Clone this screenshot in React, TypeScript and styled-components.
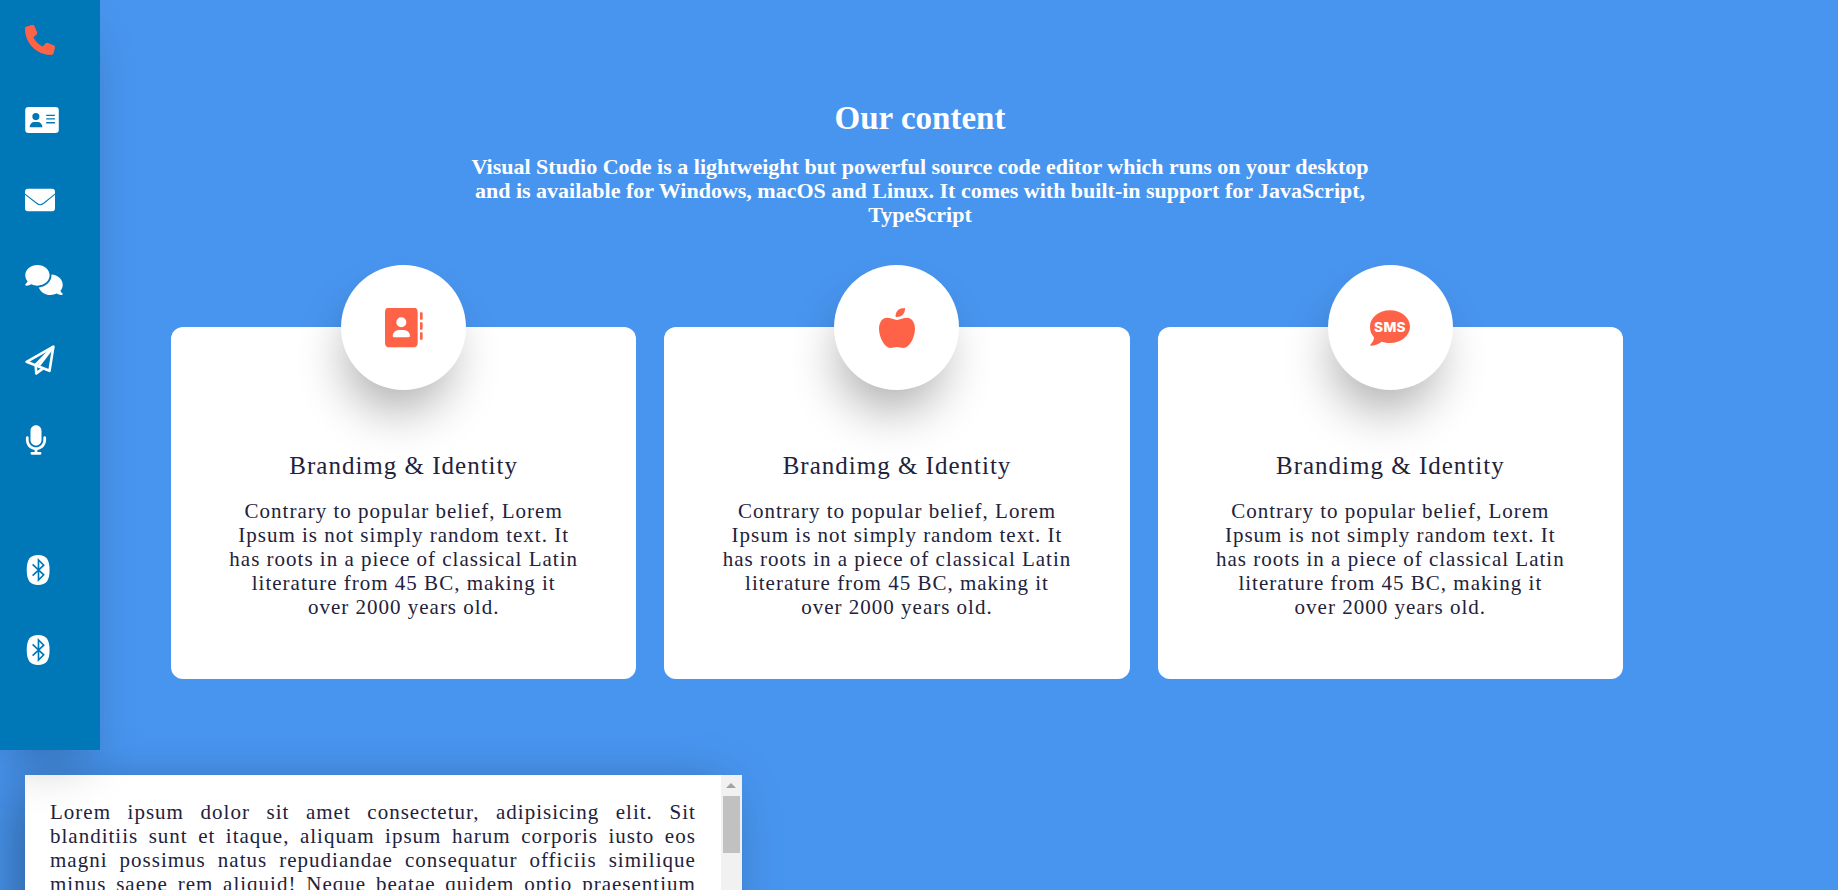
import React, { useState } from 'react';
import styled, { createGlobalStyle } from 'styled-components';
import { FaPhone, FaMicrophone, FaComments } from 'react-icons/fa6';

const colors = {
  page: '#4895ef',
  rail: '#0077b6',
  accent: '#ff6347',
  ink: '#22223b',
  white: '#ffffff',
};

const GlobalStyle = createGlobalStyle`
  *, *::before, *::after { box-sizing: border-box; }
  html { scrollbar-width: none; }
  body {
    margin: 0;
    background: ${colors.page};
    color: ${colors.ink};
    font-family: "Liberation Serif", serif;
    font-size: 21px;
    line-height: 24px;
  }
  h2, h3, p, ul { margin: 0; padding: 0; }
`;

const TopRow = styled.div`
  display: flex;
  align-items: stretch;
`;

const Rail = styled.nav`
  flex: 0 0 100px;
  position: relative;
  z-index: 1;
  padding-bottom: 60px;
  background: ${colors.rail};
  box-shadow: -3px 25px 50px -12px rgba(0, 0, 0, 0.25);
`;

const RailList = styled.ul`
  list-style: none;
`;

const RailItem = styled.li<{ $gapAbove?: boolean }>`
  margin-top: ${({ $gapAbove }) => ($gapAbove ? '50px' : '0')};
`;

const RailLink = styled.a<{ $active?: boolean; $iconWidth: number }>`
  display: flex;
  align-items: center;
  height: 80px;
  padding-left: 25px;
  color: ${({ $active }) => ($active ? colors.accent : colors.white)};

  svg {
    display: block;
    height: 30px;
    width: ${({ $iconWidth }) => $iconWidth}px;
  }
`;

const Content = styled.main`
  flex: 1;
  min-width: 0;
  padding: 100px 0 71px;
`;

const Intro = styled.header`
  display: flex;
  flex-direction: column;
  align-items: center;
  gap: 19px;
  padding-right: 98px;
  color: ${colors.white};
  text-align: center;
`;

const IntroTitle = styled.h2`
  font-size: 33px;
  line-height: 36px;
  font-weight: 700;
`;

const IntroText = styled.p`
  max-width: 910px;
  font-size: 22px;
  font-weight: 700;
`;

const CardGrid = styled.div`
  display: grid;
  grid-template-columns: repeat(3, 1fr);
  gap: 28px;
  margin-top: 100px;
  padding: 0 215px 0 71px;
`;

const Card = styled.section`
  display: flex;
  flex-direction: column;
  align-items: center;
  padding-bottom: 60px;
  border-radius: 12px;
  background: ${colors.white};
  text-align: center;
  letter-spacing: 1px;
`;

const Badge = styled.div`
  display: flex;
  align-items: center;
  justify-content: center;
  width: 125px;
  height: 125px;
  margin-top: -62px;
  border-radius: 50%;
  background: ${colors.white};
  color: ${colors.accent};
  box-shadow: -5px 30px 50px -10px rgba(0, 0, 0, 0.33);

  svg {
    display: block;
    width: 40px;
    height: 40px;
  }
`;

const CardTitle = styled.h3`
  margin: 61px 0 19px;
  font-size: 25px;
  line-height: 29px;
  font-weight: 400;
`;

const CardText = styled.p`
  max-width: 355px;
`;

const Article = styled.article`
  display: flex;
  width: 39%;
  height: 250px;
  margin: 25px;
  background: ${colors.white};
  box-shadow: -14px 10px 50px -5px rgba(0, 0, 0, 0.35);
`;

const ArticleBody = styled.div`
  flex: 1;
  min-width: 0;
  padding: 25px;
  overflow-y: auto;
  scrollbar-width: none;
  letter-spacing: 1px;
  text-align: justify;
`;

const ScrollTrack = styled.div`
  display: flex;
  flex-direction: column;
  flex: 0 0 21px;
  background: #f1f1f1;
`;

const ScrollArrow = styled.span<{ $down?: boolean }>`
  display: flex;
  align-items: center;
  justify-content: center;
  flex: 0 0 21px;

  &::before {
    content: "";
    border: 5px solid transparent;
    border-top: ${({ $down }) => ($down ? '5px solid #a3a3a3' : '0')};
    border-bottom: ${({ $down }) => ($down ? '0' : '5px solid #a3a3a3')};
  }
`;

const ScrollLane = styled.div`
  flex: 1;
  padding: 0 2px;
`;

const ScrollThumb = styled.div`
  height: 57px;
  background: #c1c1c1;
`;

const AddressCardIcon = () => (
  <svg viewBox="0 0 104 93" fill="currentColor" aria-hidden="true">
    <path
      fillRule="evenodd"
      d="M10 6H94A10 10 0 0 1 104 16V77A10 10 0 0 1 94 87H10A10 10 0 0 1 0 77V16A10 10 0 0 1 10 6Z
         M33 25A11 11 0 1 0 33 47A11 11 0 1 0 33 25Z
         M28 53A14 14 0 0 0 14 67V69H53V67A14 14 0 0 0 39 53Z
         M65 30V34H92V30Z M65 41V45H92V41Z M65 53V57H92V53Z"
    />
  </svg>
);

const EnvelopeIcon = () => (
  <svg viewBox="0 0 93 93" fill="currentColor" aria-hidden="true">
    <path d="M9 12H84Q93 12 93 21V26L56 56Q47 63 38 56L0 26V21Q0 12 9 12Z" />
    <path d="M0 30L36 59Q47 67 58 59L93 30V72Q93 81 84 81H9Q0 81 0 72Z" />
  </svg>
);

const PaperPlaneIcon = () => (
  <svg
    viewBox="0 0 93 93"
    fill="none"
    stroke="currentColor"
    strokeWidth="8"
    strokeLinejoin="round"
    aria-hidden="true"
  >
    <path d="M88 5L5 52L76 80Z" />
    <path d="M88 5L33 62L35 88L54 74" />
    <path d="M88 5L40 68" />
  </svg>
);

const BluetoothIcon = () => (
  <svg viewBox="-5 0 76 92" aria-hidden="true">
    <path
      fill="currentColor"
      d="M35 0C60 0 70 14 70 46S60 92 35 92S0 78 0 46S10 0 35 0Z"
    />
    <path
      d="M18 29L52 61L36 77V15L52 31L18 63"
      fill="none"
      stroke={colors.rail}
      strokeWidth="5"
    />
  </svg>
);

const AddressBookIcon = () => (
  <svg viewBox="-3 2 120 120" fill="currentColor" aria-hidden="true">
    <path
      fillRule="evenodd"
      d="M14 0H84Q98 0 98 14V106Q98 120 84 120H14Q0 120 0 106V14Q0 0 14 0Z
         M49 30A15 15 0 1 0 49 60A15 15 0 1 0 49 30Z
         M42 68A18 18 0 0 0 23 86Q23 90 28 90H70Q75 90 75 86A18 18 0 0 0 57 68Z"
      overflow="visible"
    />
    <path d="M105 15H110Q113 15 113 18V34Q113 37 110 37H105Z M105 45H110Q113 45 113 48V64Q113 67 110 67H105Z M105 75H110Q113 75 113 78V94Q113 97 110 97H105Z" />
  </svg>
);

const AppleIcon = () => (
  <svg viewBox="-6 0 120 120" fill="currentColor" aria-hidden="true">
    <path d="M50 27C48 10 60 0 78 0C79 18 67 28 50 27Z" />
    <path d="M54 36C62 34 74 29 84 29C100 30 108 44 108 64C107 92 90 120 74 120C66 120 62 117 54 117C46 117 42 120 34 120C18 120 1 92 0 64C0 44 8 30 24 29C34 29 46 34 54 36Z" />
  </svg>
);

const SmsIcon = () => (
  <svg viewBox="0 0 120 120" aria-hidden="true">
    <path
      fill="currentColor"
      d="M60 7C93 7 120 29 120 56S93 105 60 105C51 105 43 103 35 101C25 109 13 113 2 113Q0 113 1 110C7 104 12 97 12 88C4 79 0 68 0 56C0 29 27 7 60 7Z"
    />
    <text
      x="60"
      y="72"
      textAnchor="middle"
      fontFamily="Inter, sans-serif"
      fontWeight="800"
      fontSize="41"
      fill={colors.white}
    >
      SMS
    </text>
  </svg>
);

const railLinks = [
  { label: 'Phone', icon: <FaPhone />, width: 30, active: true },
  { label: 'Contact card', icon: <AddressCardIcon />, width: 34 },
  { label: 'Mail', icon: <EnvelopeIcon />, width: 30 },
  { label: 'Comments', icon: <FaComments />, width: 38 },
  { label: 'Send', icon: <PaperPlaneIcon />, width: 30 },
  { label: 'Microphone', icon: <FaMicrophone />, width: 22 },
  { label: 'Bluetooth', icon: <BluetoothIcon />, width: 25, gapAbove: true },
  { label: 'Bluetooth devices', icon: <BluetoothIcon />, width: 25 },
];

const cards = [
  { id: 'contacts', icon: <AddressBookIcon /> },
  { id: 'apple', icon: <AppleIcon /> },
  { id: 'sms', icon: <SmsIcon /> },
];

export default function App() {
  // Scroll position of the article, from 0 (top) to 1 (bottom).
  const [progress, setProgress] = useState(0);

  const handleScroll = (event: React.UIEvent<HTMLDivElement>) => {
    const { scrollTop, scrollHeight, clientHeight } = event.currentTarget;
    setProgress(scrollTop / Math.max(1, scrollHeight - clientHeight));
  };

  return (
    <>
      <GlobalStyle />
      <TopRow>
        <Rail aria-label="Main">
          <RailList>
            {railLinks.map(({ label, icon, width, active, gapAbove }) => (
              <RailItem key={label} $gapAbove={gapAbove}>
                <RailLink href="#" aria-label={label} $active={active} $iconWidth={width}>
                  {icon}
                </RailLink>
              </RailItem>
            ))}
          </RailList>
        </Rail>
        <Content>
          <Intro>
            <IntroTitle>Our content</IntroTitle>
            <IntroText>
              Visual Studio Code is a lightweight but powerful source code editor which runs on your
              desktop and is available for Windows, macOS and Linux. It comes with built-in support
              for JavaScript, TypeScript
            </IntroText>
          </Intro>
          <CardGrid>
            {cards.map(({ id, icon }) => (
              <Card key={id}>
                <Badge>{icon}</Badge>
                <CardTitle>Brandimg &amp; Identity</CardTitle>
                <CardText>
                  Contrary to popular belief, Lorem Ipsum is not simply random text. It has roots in
                  a piece of classical Latin literature from 45 BC, making it over&nbsp;2000 years
                  old.
                </CardText>
              </Card>
            ))}
          </CardGrid>
        </Content>
      </TopRow>
      <Article>
        <ArticleBody tabIndex={0} onScroll={handleScroll}>
          <p>
            Lorem ipsum dolor sit amet consectetur, adipisicing elit. Sit blanditiis sunt et itaque,
            aliquam ipsum harum corporis iusto eos magni possimus natus repudiandae consequatur
            officiis similique minus saepe rem aliquid! Neque beatae quidem optio praesentium
            voluptatum, quas dolores nesciunt eligendi fugiat veniam. Reprehenderit voluptas ducimus
            architecto, explicabo tempora laboriosam nihil dolorum perspiciatis quibusdam. Voluptates
            molestiae accusantium eveniet, quod recusandae deleniti provident maiores cumque animi
            inventore. Ratione asperiores temporibus veritatis laudantium, quisquam molestias
            distinctio. Soluta expedita necessitatibus commodi, facilis earum obcaecati vero culpa
            nulla dignissimos. Exercitationem assumenda placeat sapiente, doloribus omnis aspernatur
            quaerat voluptatem. Cupiditate incidunt pariatur reiciendis, suscipit mollitia unde
            consequuntur ipsa debitis. Perferendis tenetur quae iste excepturi, numquam modi
            repellendus fugit autem. Laborum delectus odio nemo, rerum voluptatibus labore atque
            error quasi. Similique accusamus ullam nostrum, esse tempore dolorem magnam illum
            aliquid. Deserunt velit quo impedit, sequi ipsam eius officia aperiam vitae. Corrupti
            blanditiis minima totam, itaque harum nobis porro saepe facere. Consequatur rerum
            repudiandae beatae, optio natus iusto possimus quidem praesentium. Maxime adipisci fuga
            voluptate, enim hic dicta sint laudantium ea. Doloremque nisi ab dolor, at eaque
            cupiditate quia eum voluptatem. Architecto illo inventore veritatis, quasi beatae vitae
            dicta sunt explicabo. Nemo enim ipsam voluptatem, quia voluptas sit aspernatur aut odit
            fugit. Consequuntur magni dolores eos, qui ratione sequi nesciunt neque porro.
          </p>
        </ArticleBody>
        <ScrollTrack aria-hidden="true">
          <ScrollArrow />
          <ScrollLane>
            <ScrollThumb style={{ marginTop: Math.round(progress * 151) }} />
          </ScrollLane>
          <ScrollArrow $down />
        </ScrollTrack>
      </Article>
    </>
  );
}
